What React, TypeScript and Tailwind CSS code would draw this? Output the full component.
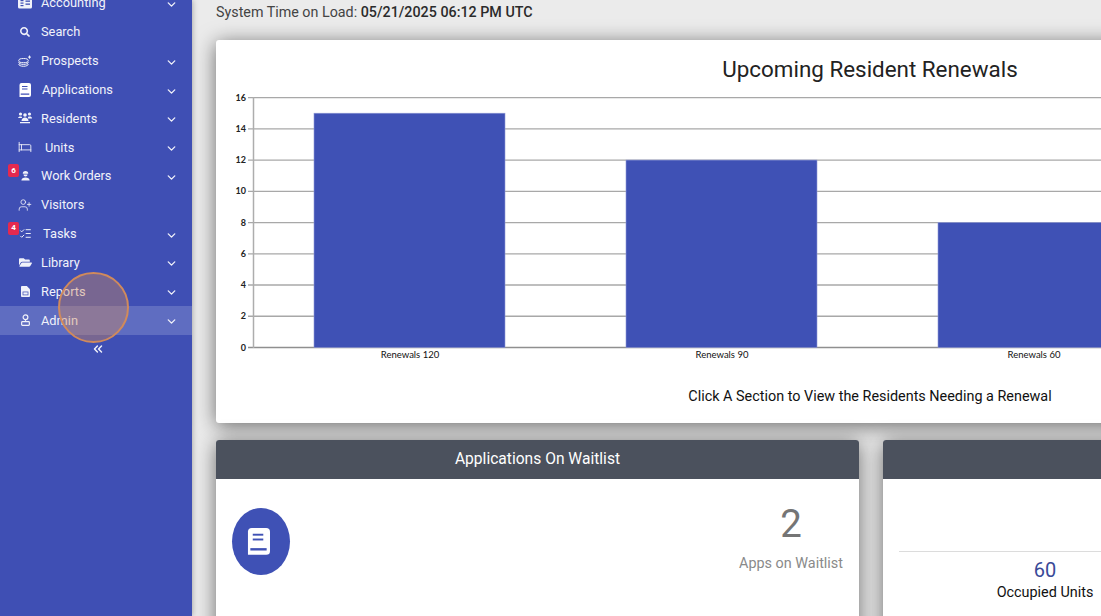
import React from "react";
import { ChevronDown, ChevronsLeft, Bed, UserPlus, ListChecks } from "lucide-react";
import { FaSearch, FaFolderOpen } from "react-icons/fa";

const Money = () => (
  <svg width="14" height="12" viewBox="0 0 14 12"><rect x="0" y="0.5" width="14" height="11" rx="1.5" fill="currentColor" /><rect x="7.5" y="3.5" width="4.5" height="1.3" fill="#3f4fb4" /><rect x="7.5" y="6.5" width="4.5" height="1.3" fill="#3f4fb4" /><rect x="2.5" y="3" width="3" height="1.2" fill="#3f4fb4" /><rect x="2.5" y="5.5" width="3" height="1.2" fill="#3f4fb4" /><rect x="2.5" y="8" width="3" height="1.2" fill="#3f4fb4" /></svg>
);
const Layers = () => (
  <svg width="14" height="12" viewBox="0 0 14 12" fill="none" stroke="currentColor" strokeWidth="1"><ellipse cx="5.5" cy="5.6" rx="4.8" ry="2.1" /><path d="M0.7 7.2c0 1.3 2.100 2.200 4.800 2.200s4.800-.9 4.800-2.200M0.700 9c0 1.300 2.100 2.300 4.800 2.300s4.800-1 4.800-2.300" /><path d="M11.500 0.500v3.200M10 2.100h3" /></svg>
);
const Book = ({ bg = "#3f4fb4", size = 12 }: { bg?: string; size?: number }) => (
  <svg width={size} height={size * 1.167} viewBox="0 0 24 28"><path d="M5 0h15a4 4 0 0 1 4 4v20a4 4 0 0 1-4 4H1V4a4 4 0 0 1 4-4z" fill="white" /><rect x="6" y="6" width="11" height="2" fill={bg} /><rect x="6" y="11" width="11" height="2" fill={bg} /><rect x="3.500" y="21" width="17" height="2.500" fill={bg} /></svg>
);
const People = () => (
  <svg width="14" height="12" viewBox="0 0 14 12" fill="currentColor"><circle cx="2.5" cy="2" r="1.6" /><circle cx="11.5" cy="2" r="1.6" /><circle cx="7" cy="3" r="1.8" /><path d="M0 6.500c0-1.500 1-2 2.500-2S4 5 4 6H0zM10 6c0-1 0-1.500 1.500-1.500S14 5 14 6.500h-4zM3.500 9c0-2.200 1.500-3.400 3.500-3.400s3.500 1.200 3.500 3.400h-7zM2 10h10v1.300H2z" /></svg>
);
const Worker = () => (
  <svg width="11" height="11" viewBox="0 0 12 12" fill="currentColor"><path d="M3 4.200a3 3 0 0 1 6 0H3z" /><path d="M3.800 5h4.400a2.200 2.200 0 0 1-4.400 0z" /><path d="M1.500 11.500c0-2.300 2-3.300 4.500-3.300s4.500 1 4.500 3.300h-9z" /></svg>
);
const Report = () => (
  <svg width="9" height="11" viewBox="0 0 10 12" fill="currentColor"><path d="M1 0h5.500L10 3.500V11a1 1 0 0 1-1 1H1a1 1 0 0 1-1-1V1a1 1 0 0 1 1-1z" /><rect x="2.200" y="6.500" width="5.600" height="3.300" fill="none" stroke="#3f4fb4" strokeWidth="0.800" /></svg>
);
const Admin = () => (
  <svg width="11" height="12" viewBox="0 0 12 13" fill="none" stroke="currentColor" strokeWidth="1.300"><circle cx="6" cy="3.500" r="2.600" /><path d="M6 6.500v1" /><rect x="1.800" y="8.300" width="8.400" height="4" rx="0.800" /></svg>
);

type Item = { label: string; icon: React.ReactNode; textX: string; chevron?: boolean; badge?: string; active?: boolean };
const items: Item[] = [
  { label: "Accounting", icon: <Money />, textX: "ml-[8px]", chevron: true },
  { label: "Search", icon: <FaSearch size={10} />, textX: "ml-[8px]" },
  { label: "Prospects", icon: <Layers />, textX: "ml-[8px]", chevron: true },
  { label: "Applications", icon: <Book />, textX: "ml-[9px]", chevron: true },
  { label: "Residents", icon: <People />, textX: "ml-[8px]", chevron: true },
  { label: "Units", icon: <Bed size={14} strokeWidth={1.500} />, textX: "ml-[12px]", chevron: true },
  { label: "Work Orders", icon: <Worker />, textX: "ml-[8px]", chevron: true, badge: "6" },
  { label: "Visitors", icon: <UserPlus size={14} strokeWidth={1.400} />, textX: "ml-[8px]" },
  { label: "Tasks", icon: <ListChecks size={13} strokeWidth={1.800} />, textX: "ml-[10px]", chevron: true, badge: "4" },
  { label: "Library", icon: <FaFolderOpen size={13} />, textX: "ml-[8px]", chevron: true },
  { label: "Reports", icon: <Report />, textX: "ml-[8px]", chevron: true },
  { label: "Admin", icon: <Admin />, textX: "ml-[8px]", chevron: true, active: true },
];

function NavRow({ item }: { item: Item }) {
  return (
    <div className={`relative flex h-[28.83px] shrink-0 items-center pl-[17px] pr-[14px] text-[12.800px] text-[#f1f2fa] ${item.active ? "bg-[#5f6dc1]" : ""}`}>
      <span className="flex w-[16px] justify-center">{item.icon}</span>
      <span className={item.textX}>{item.label}</span>
      {item.chevron && <ChevronDown size={13} strokeWidth={2.500} className="ml-auto mt-[3px]" />}
      {item.badge && (
        <span className="absolute left-[8px] top-[2.500px] flex h-[13px] w-[11px] items-center justify-center rounded-[2px] bg-[#e5294f] text-[8px] font-bold text-white">
          {item.badge}
        </span>
      )}
    </div>
  );
}

const bars = [
  { x: 314, v: 15, label: "Renewals 120" },
  { x: 626, v: 12, label: "Renewals 90" },
  { x: 938, v: 8, label: "Renewals 60" },
];

function Chart() {
  const y = (v: number) => 347.5 - v * 15.62;
  return (
    <svg width="1308" height="280" viewBox="216 90 1308 280" className="mt-[7px] block">
      {[0, 2, 4, 6, 8, 10, 12, 14, 16].map((v) => (
        <g key={v}>
          <line x1="248" x2="1524" y1={y(v)} y2={y(v)} stroke={v === 0 ? "#8f8f8f" : "#a8a8a8"} strokeWidth="1.300" />
          <text x="246" y={y(v) + 3} textAnchor="end" fontSize="9" fontFamily="Lato, sans-serif" fontWeight="700" fill="#222">{v}</text>
        </g>
      ))}
      <line x1="253.500" x2="253.500" y1="97" y2="348" stroke="#adadad" strokeWidth="1.500" />
      {bars.map((b) => (
        <g key={b.label}>
          <rect x={b.x} y={y(b.v)} width="191" height={b.v * 15.62} fill="#3f51b5" stroke="#8f9ad6" strokeWidth="0.600" />
          <text x={b.x + 96} y="358" textAnchor="middle" fontSize="9.500" fontFamily="Lato, sans-serif" fill="#111">{b.label}</text>
        </g>
      ))}
    </svg>
  );
}

export default function App() {
  return (
    <div className="relative flex h-[616px] w-[1101px] overflow-hidden bg-[#ebebeb] font-['Roboto',sans-serif]">
      <aside className="z-10 flex h-full w-[192px] shrink-0 flex-col overflow-hidden bg-[#3f4fb4] shadow-[0_0_6px_rgba(0,0,0,0.35)]">
        <div className="mt-[-11.400px] flex flex-col">
          {items.map((it) => <NavRow key={it.label} item={it} />)}
        </div>
        <div className="mt-[7px] flex justify-center text-[#f1f2fa]">
          <ChevronsLeft size={14} strokeWidth={2.500} className="ml-[3px]" />
        </div>
      </aside>

      <main className="w-[1308px] shrink-0 pl-[24px]">
        <div className="mt-[2px] text-[14.300px] leading-[20px] text-[#444]">
          System Time on Load: <span className="font-medium text-[#2b2b2b]">05/21/2025 06:12 PM UTC</span>
        </div>

        <section className="mt-[18px] w-[1308px] rounded-[3px] bg-white pb-[16px] pt-[15px] shadow-[0_3px_20px_rgba(0,0,0,0.55)]">
          <h1 className="text-center text-[22.400px] leading-[28px] text-[#222]">Upcoming Resident Renewals</h1>
          <Chart />
          <p className="mt-[17px] text-center text-[14.400px] leading-[20px] text-[#111]">
            Click A Section to View the Residents Needing a Renewal
          </p>
        </section>

        <div className="mt-[17px] flex w-[1308px] gap-[24px]">
          <section className="h-[300px] w-[643px] shrink-0 rounded-[3px] bg-white shadow-[0_3px_20px_rgba(0,0,0,0.55)]">
            <header className="flex h-[39px] items-center justify-center rounded-t-[3px] bg-[#4b515d] pt-[1px] text-[15.600px] text-white">
              Applications On Waitlist
            </header>
            <div className="flex items-start justify-between px-[16px] pt-[29px]">
              <div className="flex h-[67px] w-[58px] items-center justify-center rounded-[50%] bg-[#3f51b5]">
                <span className="mr-[6px] flex"><Book bg="#3f51b5" size={23} /></span>
              </div>
              <div className="flex flex-col items-center">
                <span className="text-[38.400px] leading-[32px] text-[#757575]">2</span>
                <span className="mt-[14px] text-[14.400px] leading-[20px] text-[#8a8a8a]">Apps on Waitlist</span>
              </div>
            </div>
          </section>

          <section className="h-[300px] w-[641px] shrink-0 rounded-[3px] bg-white shadow-[0_3px_20px_rgba(0,0,0,0.55)]">
            <header className="h-[39px] rounded-t-[3px] bg-[#4b515d]" />
            <div className="px-[16px] pt-[72px]">
              <div className="border-t border-[#dcdcdc] pt-[8px]">
                <div className="w-[292px] text-center">
                  <div className="text-[20px] leading-[20px] text-[#3a4a98]">60</div>
                  <div className="mt-[3px] text-[14.400px] leading-[20px] text-[#111]">Occupied Units</div>
                </div>
              </div>
            </div>
          </section>
        </div>
      </main>

      <div className="absolute left-[58px] top-[272px] z-20 h-[71px] w-[71px] rounded-full border-[2.500px] border-[#d08a5c] bg-[#d08a5c]/40" />
    </div>
  );
}
